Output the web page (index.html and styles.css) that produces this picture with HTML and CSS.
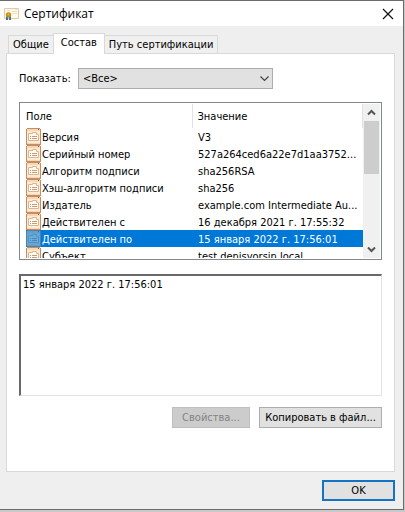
FILE: index.html
```
<!DOCTYPE html>
<html lang="ru">
<head>
<meta charset="utf-8">
<title>Сертификат</title>
<link rel="stylesheet" href="styles.css">
</head>
<body>
<svg width="0" height="0" class="defs" aria-hidden="true">
  <symbol id="field" viewBox="0 0 15 17">
    <path fill="#c08f68" d="M0 1h1V0h13v1h1v16H0z"/>
    <path fill="#fdebd6" d="M1 3h13v12H1z"/>
    <path fill="#f9d5b0" d="M1 1h13v2H1zM1 15h13v1H1z"/>
    <path fill="#8f5e3e" d="M12 1h1v1h-1z"/>
    <path fill="#fffaf2" stroke="#dcb491" d="M2.500 5.500H6.500V4.500H10.500V6.500H12.500V12.500H2.500z"/>
    <path stroke="#c89b74" d="M4 8.500h1M6 8.500h5M4 10.500h1M6 10.500h5"/>
  </symbol>
</svg>
<main class="window">
  <header class="titlebar">
    <svg class="cert" width="16" height="14" viewBox="0 0 16 14" aria-hidden="true">
      <path fill="#fffaf0" stroke="#e5c99e" d="M.5 1.500h14v10H.5z"/>
      <path fill="#f3dfc0" d="M3 3h3v1H3zM8 4h5v1H8zM8 6h5v1H8zM11 2h2v1h-2z"/>
      <path fill="#3178b9" d="M2 9h2v4H2zM5 9h2v4H5z"/>
      <circle cx="4.500" cy="8" r="2.700" fill="#c58a13"/>
      <circle cx="4.500" cy="7.500" r="1.200" fill="#e0ad36"/>
    </svg>
    <h1>Сертификат</h1>
    <button class="close" aria-label="Закрыть">
      <svg width="12" height="12" viewBox="0 0 12 12"><path fill="none" stroke="#111" stroke-width="1.200" d="M1 1l10 10M11 1L1 11"/></svg>
    </button>
  </header>
  <div class="body">
    <nav class="tabs" role="tablist">
      <button class="tab" role="tab">Общие</button>
      <button class="tab active" role="tab" aria-selected="true">Состав</button>
      <button class="tab" role="tab">Путь сертификации</button>
    </nav>
    <section class="panel">
      <div class="filter">
        <label for="show">Показать:</label>
        <div class="combo">
          <select id="show"><option>&lt;Все&gt;</option></select>
          <svg width="9" height="6" viewBox="0 0 9 6" aria-hidden="true"><path fill="none" stroke="#444" stroke-width="1.200" d="M.5 .5l4 4 4-4"/></svg>
        </div>
      </div>
      <div class="list">
        <div class="rows">
          <table>
            <thead><tr><th>Поле</th><th>Значение</th></tr></thead>
            <tbody>
              <tr><td><svg><use href="#field"/></svg><span>Версия</span></td><td>V3</td></tr>
              <tr><td><svg><use href="#field"/></svg><span>Серийный номер</span></td><td>527a264ced6a22e7d1aa3752...</td></tr>
              <tr><td><svg><use href="#field"/></svg><span>Алгоритм подписи</span></td><td>sha256RSA</td></tr>
              <tr><td><svg><use href="#field"/></svg><span>Хэш-алгоритм подписи</span></td><td>sha256</td></tr>
              <tr><td><svg><use href="#field"/></svg><span>Издатель</span></td><td>example.com Intermediate Au...</td></tr>
              <tr><td><svg><use href="#field"/></svg><span>Действителен с</span></td><td>16 декабря 2021 г. 17:55:32</td></tr>
              <tr class="selected"><td><svg><use href="#field"/></svg><span>Действителен по</span></td><td>15 января 2022 г. 17:56:01</td></tr>
              <tr><td><svg><use href="#field"/></svg><span>Субъект</span></td><td>test.denisvorsin.local</td></tr>
            </tbody>
          </table>
        </div>
        <div class="scroll">
          <button aria-label="Вверх"><svg width="9" height="7" viewBox="0 0 9 7"><path fill="none" stroke="#555" stroke-width="2" d="M1 5.500L4.500 2 8 5.500"/></svg></button>
          <div class="track"><div class="thumb"></div></div>
          <button aria-label="Вниз"><svg width="9" height="7" viewBox="0 0 9 7"><path fill="none" stroke="#555" stroke-width="2" d="M1 1.500L4.500 5 8 1.500"/></svg></button>
        </div>
      </div>
      <textarea class="value" aria-label="Значение поля" readonly>15 января 2022 г. 17:56:01</textarea>
      <div class="actions">
        <button class="btn props" disabled>Свойства...</button>
        <button class="btn copy">Копировать в файл...</button>
      </div>
    </section>
    <footer><button class="btn ok">OK</button></footer>
  </div>
</main>
</body>
</html>
```
FILE: styles.css
```
* { box-sizing: border-box; }
body {
  margin: 0;
  padding-right: 1px;
  min-height: 100vh;
  background: #c9c9c9;
  color: #000;
  font: 11px/17px "DejaVu Sans Condensed", "DejaVu Sans", sans-serif;
}
button, select, textarea { font: inherit; color: inherit; margin: 0; border-radius: 0; }
button { padding: 0; white-space: nowrap; }
svg { display: block; flex: none; }
.defs { position: absolute; }
.window {
  border: 1px solid #6b6b6b;
  border-left: 0;
  background: #efefef;
}
.titlebar {
  display: flex;
  align-items: center;
  height: 25px;
  padding: 0 9px 0 4px;
  background: #fff;
}
h1 { flex: 1; margin: 0 0 0 4px; font: 12px/17px "Open Sans", sans-serif; }
.close { border: 0; background: none; }
.body { padding: 7px 8px 8px 6px; }
.tabs { display: flex; align-items: flex-end; padding-left: 2px; }
.tab {
  height: 18px;
  padding: 0 4px;
  border: 1px solid #d9d9d9;
  border-bottom: 0;
  background: #f0f0f0;
}
.tab:first-child { border-right: 0; }
.tab:last-child { border-left: 0; }
.tab.active {
  height: 21px;
  margin-bottom: -1px;
  padding: 0 7px 3px;
  background: #fff;
  position: relative;
}
.panel {
  padding: 14px 12px 43px;
  border: 1px solid #d9d9d9;
  background: #fff;
}
.filter { display: flex; align-items: center; }
.filter label { width: 59px; }
.combo { position: relative; width: 195px; }
select {
  display: block;
  appearance: none;
  width: 100%;
  height: 21px;
  padding: 0 20px 0 4px;
  border: 1px solid #adadad;
  background: #e1e1e1;
}
.combo svg { position: absolute; right: 4px; top: 8px; }
.list {
  display: flex;
  height: 158px;
  margin-top: 13px;
  padding: 1px;
  border: 1px solid #828790;
}
.rows { flex: 1; min-width: 0; overflow: hidden; }
table { width: 100%; table-layout: fixed; border-collapse: collapse; }
th {
  height: 24px;
  padding: 0 5px;
  border-right: 1px solid #e3e3e3;
  font-weight: normal;
  text-align: left;
}
th:first-child { width: 171px; }
td { height: 17px; padding: 2px 0 0 6px; line-height: 15px; white-space: nowrap; overflow: hidden; }
td:first-child { display: flex; padding: 0 0 0 5px; }
td span { padding-top: 2px; }
td svg { width: 15px; height: 17px; margin-right: 1px; }
.selected { color: #fff; background: #0078d7; }
.selected td:first-child { background: linear-gradient(to right, #fff 5px, #0078d7 5px); }
.selected svg { background: #0078d7; }
.selected use { opacity: .4; }
.scroll { display: flex; flex-direction: column; width: 17px; background: #f0f0f0; }
.scroll button {
  display: flex;
  align-items: center;
  justify-content: center;
  height: 17px;
  border: 0;
  background: none;
}
.track { flex: 1; }
.thumb { width: 15px; height: 53px; margin-left: 1px; background: #cdcdcd; }
.value {
  display: block;
  width: 100%;
  height: 122px;
  margin-top: 14px;
  padding: 0 2px;
  border: 1px solid #e3e3e3;
  border-width: 2px 1px 1px 2px;
  border-top-color: #696969;
  border-left-color: #696969;
  background: #fff;
  resize: none;
  outline: 0;
}
.actions { display: flex; justify-content: flex-end; gap: 9px; margin-top: 11px; }
.btn { height: 21px; border: 1px solid #adadad; background: #e1e1e1; }
.props { width: 78px; border-color: #bfbfbf; background: #ccc; color: #838383; }
.copy { width: 123px; }
footer { display: flex; justify-content: flex-end; padding-top: 8px; }
.ok { width: 73px; border: 2px solid #1473c3; }
```
